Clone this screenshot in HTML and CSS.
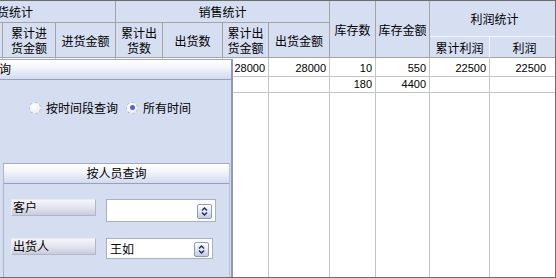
FILE: index.html
```html
<!DOCTYPE html>
<html lang="zh-CN">
<head>
<meta charset="utf-8">
<title>统计</title>
<link rel="stylesheet" href="styles.css">
</head>
<body>
<div class="frame">
  <div class="scroller">
    <table class="grid">
      <colgroup>
        <col class="w49"><col class="w51"><col class="w53"><col class="w60"><col class="w47"><col class="w60">
        <col class="w46"><col class="w61"><col class="w46"><col class="w54"><col class="w60"><col class="w70">
      </colgroup>
      <thead>
        <tr class="ra">
          <th colspan="4">进货统计</th>
          <th colspan="4">销售统计</th>
          <th rowspan="3">库存数</th>
          <th rowspan="3">库存金额</th>
          <th class="band" colspan="2" rowspan="2">利润统计</th>
        </tr>
        <tr class="rb">
          <th rowspan="2"></th>
          <th rowspan="2"></th>
          <th rowspan="2">累计进<br>货金额</th>
          <th rowspan="2">进货金额</th>
          <th rowspan="2">累计出<br>货数</th>
          <th rowspan="2">出货数</th>
          <th rowspan="2">累计出<br>货金额</th>
          <th rowspan="2">出货金额</th>
        </tr>
        <tr class="rc">
          <th class="hl">累计利润</th>
          <th class="last">利润</th>
        </tr>
      </thead>
      <tbody>
        <tr class="d1">
          <td></td><td></td><td></td><td></td><td></td><td></td>
          <td>28000</td><td>28000</td><td>10</td><td>550</td><td>22500</td><td class="last">22500</td>
        </tr>
        <tr class="d2">
          <td></td><td></td><td></td><td></td><td></td><td></td>
          <td></td><td></td><td>180</td><td>4400</td><td></td><td class="last"></td>
        </tr>
        <tr class="filler">
          <td></td><td></td><td></td><td></td><td></td><td></td>
          <td></td><td></td><td></td><td></td><td></td><td></td>
        </tr>
      </tbody>
    </table>
  </div>

  <div class="panel">
    <div class="cap cap-time"><span class="cap-text">按时间查询</span></div>
    <div class="time-body">
      <label class="radio"><span class="dot"></span><span>按时间段查询</span></label>
      <label class="radio checked"><span class="dot"></span><span>所有时间</span></label>
    </div>
    <div class="section">
      <div class="cap cap-center">按人员查询</div>
      <div class="fields">
        <div class="lbl">客户</div>
        <div class="combo"><span class="val"></span>
          <span class="spin"><svg width="7" height="9" viewBox="0 0 7 9"><path d="M1 3.5 L3.5 1 L6 3.5 M1 5.5 L3.5 8 L6 5.5" fill="none" stroke="#1d2a55" stroke-width="1.4"/></svg></span>
        </div>
        <div class="lbl">出货人</div>
        <div class="combo combo2"><span class="val">王如</span>
          <span class="spin"><svg width="7" height="9" viewBox="0 0 7 9"><path d="M1 3.5 L3.5 1 L6 3.5 M1 5.5 L3.5 8 L6 5.5" fill="none" stroke="#1d2a55" stroke-width="1.4"/></svg></span>
        </div>
      </div>
    </div>
  </div>
</div>
</body>
</html>
```

FILE: styles.css
```css
* { box-sizing: border-box; }
html, body { margin: 0; padding: 0; background: #ffffff; }
body {
  font-family: "Noto Sans CJK SC", "Noto Sans", sans-serif;
  font-size: 12px;
  color: #000;
}

.frame {
  position: relative;
  width: 556px;
  height: 278px;
  border-top: 1px solid #6b6b6b;
  border-right: 1px solid #6b6b6b;
  border-bottom: 1px solid #6b6b6b;
  overflow: hidden;
  background: #fff;
}
.scroller { width: 555px; height: 276px; overflow: hidden; }

.grid {
  margin-left: -97px;
  width: 657px;
  table-layout: fixed;
  border-collapse: separate;
  border-spacing: 0;
}
.w46 { width: 46px; } .w47 { width: 47px; } .w49 { width: 49px; } .w51 { width: 51px; }
.w53 { width: 53px; } .w54 { width: 54px; } .w60 { width: 60px; } .w61 { width: 61px; }
.w70 { width: 70px; }

.grid th {
  background: #d6def2;
  font-weight: normal;
  border-right: 1px solid #a4a4a4;
  border-bottom: 1px solid #a4a4a4;
  padding: 0;
  line-height: 15px;
  text-align: center;
  vertical-align: middle;
  white-space: nowrap;
  overflow: hidden;
}
.grid th.band { border-bottom-color: #f4f6fc; }
.grid th.hl { border-right-color: #f4f6fc; }
.ra { height: 22px; }
.rb { height: 14px; }
.rc { height: 21px; }

.grid td {
  border-right: 1px solid #c4c4c4;
  border-bottom: 1px solid #c4c4c4;
  padding: 0 3px 0 0;
  text-align: right;
  font-family: "Liberation Sans", Arial, sans-serif;
  font-size: 11px;
  line-height: 13px;
  white-space: nowrap;
}
.grid td.last { padding-right: 13px; }
.d1 { height: 19px; }
.d1 td { padding-top: 3px; }
.d2 { height: 16px; }
.filler td { height: 190px; border-bottom: none; }

/* floating query panel */
.panel {
  position: absolute;
  left: 0;
  top: 58px;
  width: 233px;
  height: 218px;
  background: #d5ddf1;
  border-top: 1px solid #9da5c2;
  border-right: 2px solid #9098b2;
  display: flex;
  flex-direction: column;
  overflow: hidden;
}
.cap {
  height: 20px;
  line-height: 18px;
  background: linear-gradient(#ffffff, #f3f5fb 40%, #d3daef);
  border-bottom: 1px solid #98a0be;
  white-space: nowrap;
  flex: none;
}
.cap-text { display: inline-block; margin-left: -49px; }
.cap-center { text-align: center; }

.time-body {
  height: 83px;
  flex: none;
  display: flex;
  align-items: center;
  padding: 0 0 28px 29px;
  gap: 8px;
}
.radio { display: flex; align-items: center; gap: 5px; line-height: 14px; }
.dot {
  width: 12px; height: 12px;
  border-radius: 50%;
  border: 1px dashed #b9bdca;
  background: radial-gradient(circle at 40% 35%, #ffffff, #e7e9f1);
  display: flex; align-items: center; justify-content: center;
}
.checked .dot::after {
  content: "";
  width: 5px; height: 5px;
  border-radius: 50%;
  background: #5566c8;
}

.section {
  margin-left: 3px;
  width: 227px;
  flex: 1;
  border-top: 1px solid #a2aac6;
  border-left: 1px solid #a9b1cb;
  border-right: 1px solid #b8c0d8;
}
.fields {
  display: grid;
  grid-template-columns: 85px 110px;
  column-gap: 10px;
  row-gap: 16px;
  padding: 15px 0 0 7px;
  align-items: start;
}
.lbl {
  height: 17px;
  line-height: 14px;
  padding-left: 1px;
  background: linear-gradient(#f5f5fa, #e3e4ee 50%, #c9ccdc);
  border: 1px solid #e9eaf2;
  border-right-color: #b2b5c7;
  border-bottom-color: #b2b5c7;
}
.combo {
  height: 23px;
  background: #fff;
  border: 1px solid #a9b0c4;
  display: flex;
  align-items: center;
  justify-content: space-between;
  padding: 1px 3px 0 3px;
}
.combo2 { width: 107px; height: 21px; }
.val { line-height: 14px; }
.spin {
  width: 15px; height: 15px;
  border: 1px solid #8f99b8;
  border-radius: 2px;
  background: linear-gradient(#ffffff, #dfe4f2 60%, #c4cbe2);
  display: flex; align-items: center; justify-content: center;
}
```
